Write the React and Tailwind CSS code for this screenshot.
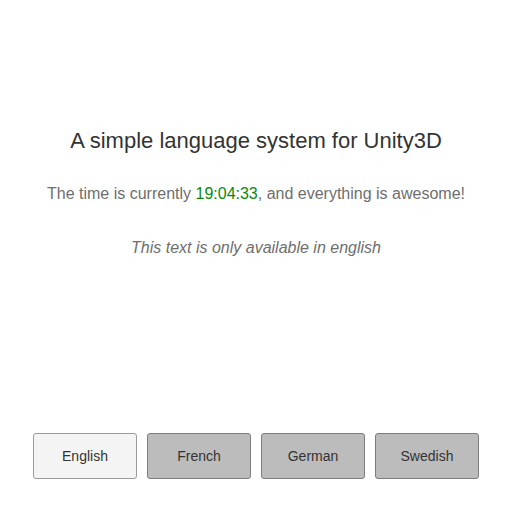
import React from 'react';

const languages = ['English', 'French', 'German', 'Swedish'];

const App = () => {
  const active = 'English';

  return (
    <div className="h-[512px] w-[512px] bg-white font-['Liberation_Sans',Arial,sans-serif] flex flex-col">
      <div className="flex flex-col items-center pt-[126px]">
        <h1 className="text-[22px] leading-[30px] text-[#333333]">
          A simple language system for Unity3D
        </h1>
        <p className="mt-[28px] text-[16px] leading-[20px] text-[#6e6e6e]">
          The time is currently <span className="text-[#0a8a0a]">19:04:33</span>, and everything is awesome!
        </p>
        <p className="mt-[34px] text-[16px] leading-[20px] italic text-[#6e6e6e]">
          This text is only available in english
        </p>
      </div>

      <div className="mt-auto mb-[33px] flex justify-center gap-[10px]">
        {languages.map((lang) => (
          <button
            key={lang}
            className={`w-[104px] h-[46px] rounded-[3px] border text-[14px] text-[#333333] ${
              lang === active
                ? 'bg-[#f4f4f4] border-[#9a9a9a]'
                : 'bg-[#bcbcbc] border-[#7c7c7c]'
            }`}
          >
            {lang}
          </button>
        ))}
      </div>
    </div>
  );
};

export default App;
